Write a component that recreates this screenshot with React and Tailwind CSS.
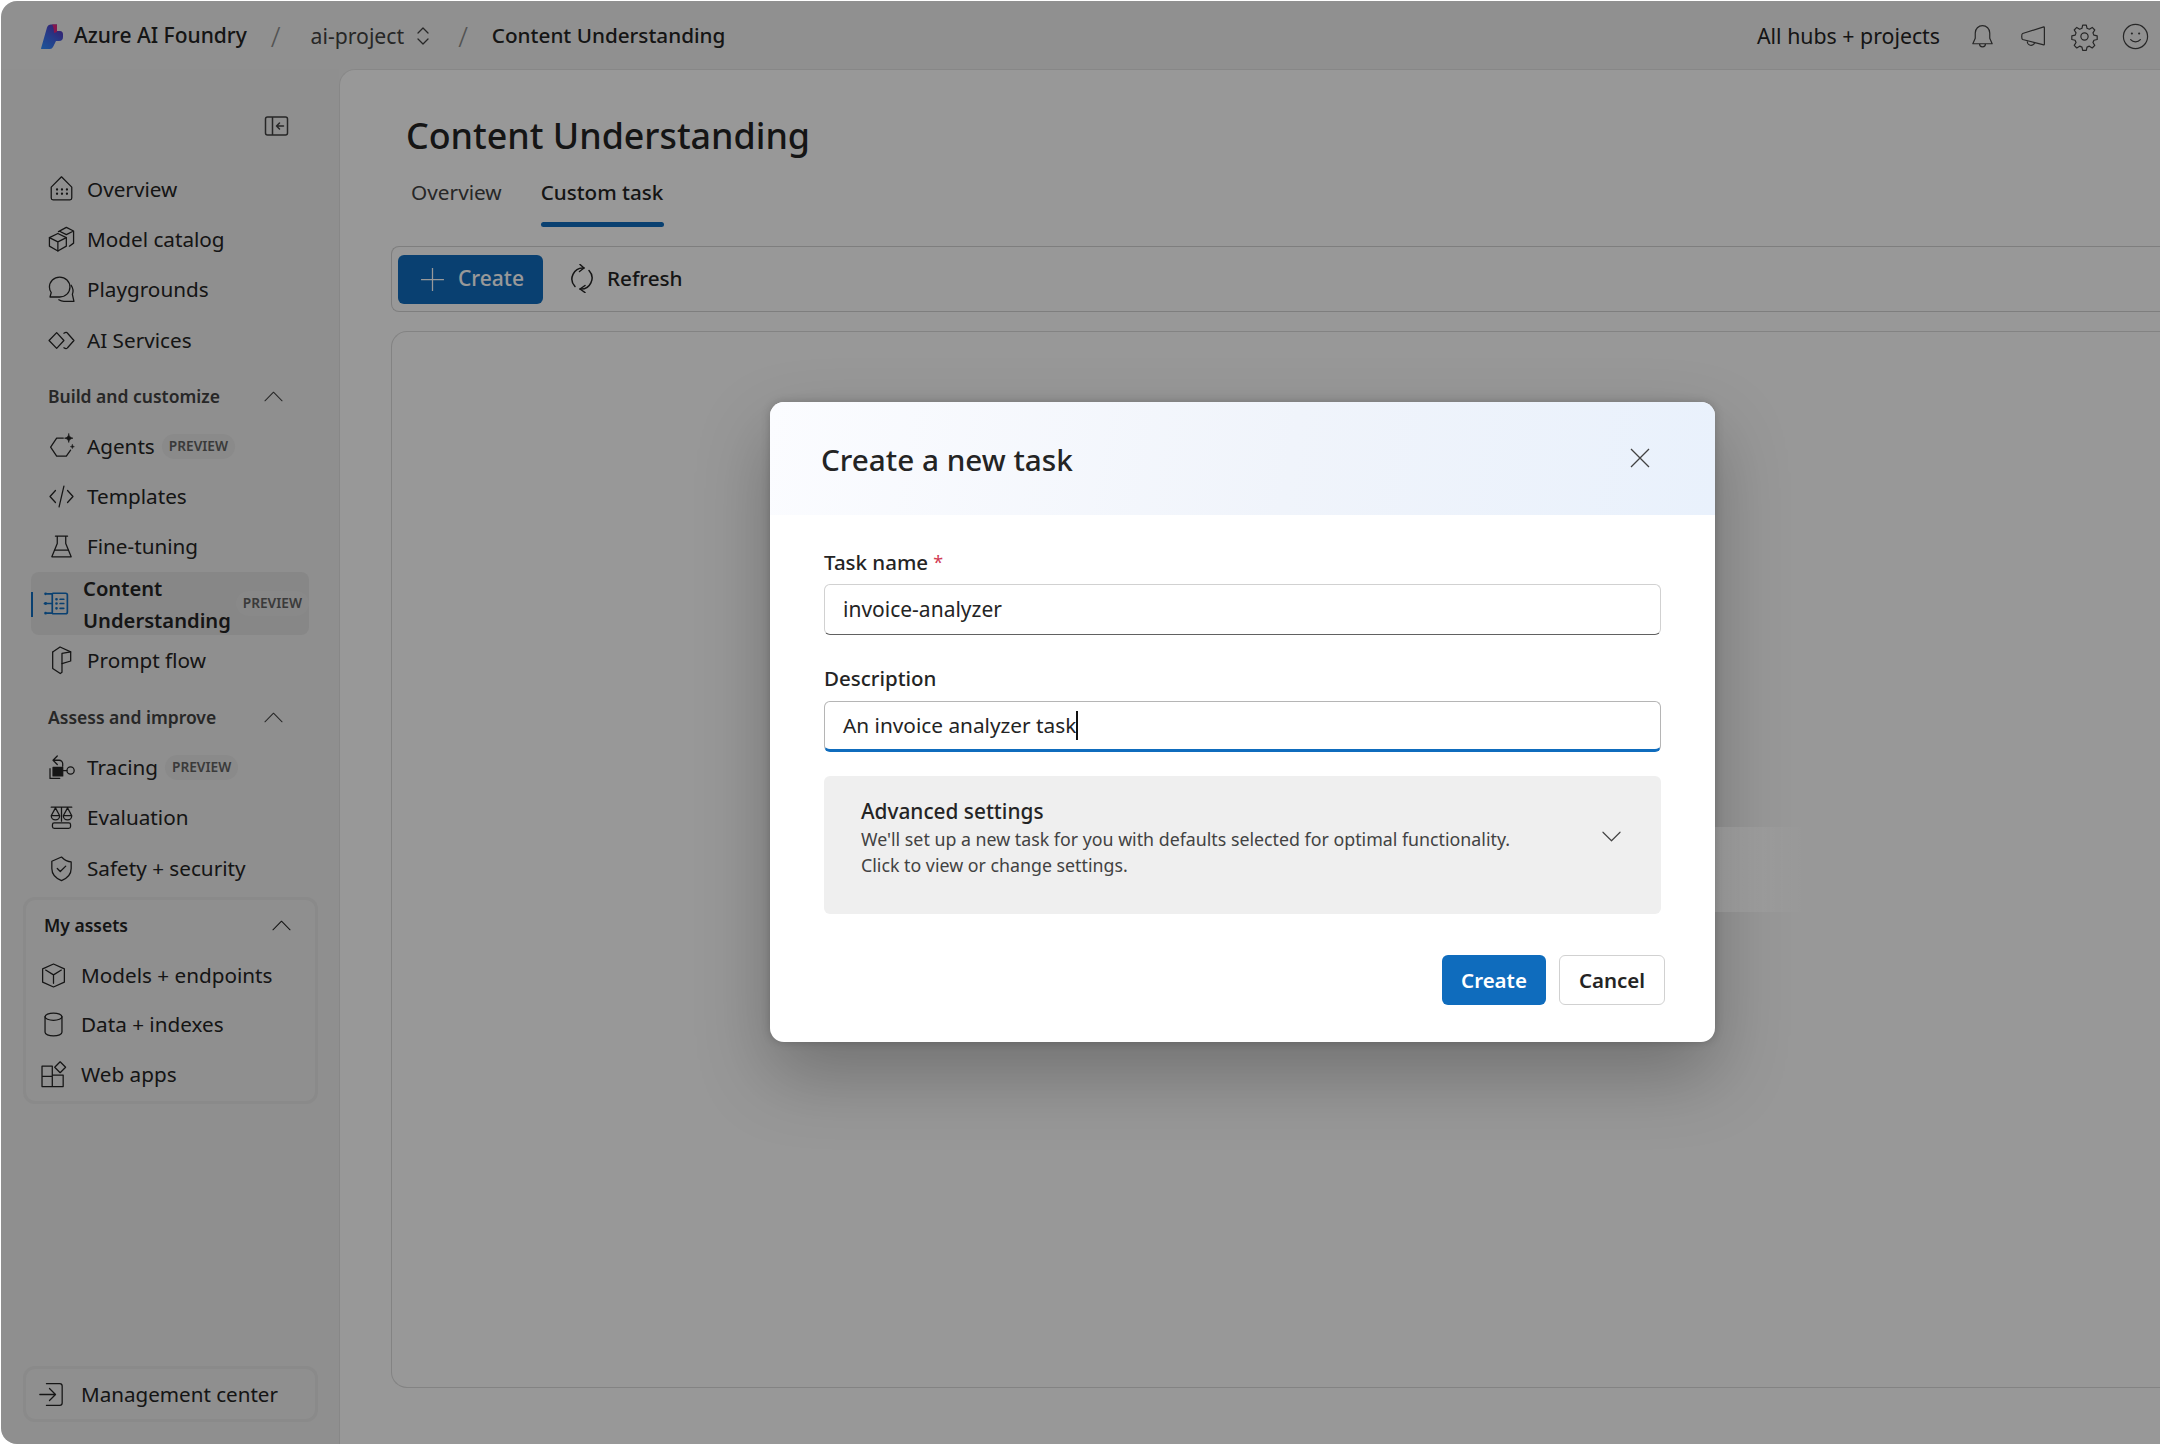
import { useId } from "react";

function Ico({ children, className = "w-[29px] h-[29px]", sw = 1.05 }) {
  return (
    <svg viewBox="0 0 24 24" fill="none" stroke="currentColor" strokeWidth={sw} strokeLinecap="round" strokeLinejoin="round" className={"shrink-0 " + className}>
      {children}
    </svg>
  );
}

function Logo() {
  const id = useId();
  return (
    <svg viewBox="0 0 22 25" className="w-[22px] h-[25px] shrink-0">
      <defs>
        <linearGradient id={id} x1="0" y1="1" x2="0.7" y2="0">
          <stop offset="0" stopColor="#2f90ff" />
          <stop offset="0.55" stopColor="#3f63e4" />
          <stop offset="1" stopColor="#5a35b8" />
        </linearGradient>
      </defs>
      <path d="M0 24.500 L6 3.500 Q7 0.500 10 0.500 L16 0.500 L16 7 H19 Q22 7 22 10.500 V13 Q22 17 18 17 H15 L12 23 Q11 25 9 25 H1 Q0 25 0 24.500z" fill={`url(#${id})`} />
      <path d="M11 0.500 L16 0.500 V8 L13 9 Q13 3 11 0.500z" fill="#e0257f" />
    </svg>
  );
}

const HomeI = () => (
  <Ico>
    <path d="M3.500 10 12 1.500 20.500 10V19a1.500 1.500 0 0 1-1.500 1.500H5A1.500 1.500 0 0 1 3.500 19z" />
    <path d="M8.300 12h.01M12.400 12h.01M16.500 12h.01M8.300 15.500h.01M12.400 15.500h.01M16.500 15.500h.01" strokeWidth="1.900" />
  </Ico>
);
const CatalogI = () => (
  <Ico>
    <path d="M9 7 16 10.500V17.500L9 21.500 2 17.500V10.500z" />
    <path d="M2 10.500 9 14l7-3.500M9 14v7.500" />
    <path d="M9.500 5.500 16 2l6 3v10l-3.500 2.500M10 5 16 8l6-3" />
  </Ico>
);
const ChatI = () => (
  <Ico>
    <path d="M10.500 1.700C15.300 1.700 19 5.400 19 10s-3.700 8.200-8.500 8.200H2.500l1-3.700C2.500 13.200 2 11.600 2 10 2 5.400 5.700 1.700 10.500 1.700z" />
    <path d="M20 8.500c1.700 2.500 2 5 1 7.500l1.300 5.800H14c-1.500 0-3-.500-4.200-1.300" />
  </Ico>
);
const DiamondsI = () => (
  <Ico>
    <path d="M8 5.500 14 12 8 18.500 1.700 12z" />
    <path d="M14 6c1.500-1 2.500-.800 3 0l5.300 6L17 18c-.500.800-1.500 1-3 0" />
  </Ico>
);
const AgentI = () => (
  <Ico>
    <path d="M13.500 5H8L3 12.500 8 20h8l3.500-5" />
    <path d="M18 1.500c.300 2.200 1.200 3.200 3.500 3.600-2.300.400-3.200 1.400-3.500 3.600-.300-2.200-1.200-3.200-3.500-3.600 2.300-.400 3.200-1.400 3.500-3.600z" fill="currentColor" strokeWidth="0.500" />
    <path d="M21 10.500c.100.900.600 1.400 1.600 1.600-1 .200-1.500.700-1.600 1.600-.100-.900-.600-1.400-1.600-1.600 1-.200 1.500-.700 1.600-1.600z" fill="currentColor" strokeWidth="0.500" />
  </Ico>
);
const CodeI = () => (
  <Ico>
    <path d="M7 7 2.500 12 7 17M17 7l4.500 5L17 17M14 3.500 10 20.500" />
  </Ico>
);
const FlaskI = () => (
  <Ico>
    <path d="M7 3.500h10M8.500 3.500v6L4 20.500h16L15.500 9.500V3.500" />
    <path d="M6.500 15h11" />
  </Ico>
);
const ListFlowI = ({ className }) => (
  <Ico sw={1.4} className={className}>
    <path d="M9 3.500h10.500a1.500 1.500 0 0 1 1.500 1.500v14a1.500 1.500 0 0 1-1.500 1.500H9" />
    <path d="M12 8.500h.01M12 12h.01M12 16h.01" strokeWidth="2.200" />
    <path d="M15 8.500h3M15 12h3M15 16h3" />
    <path d="M2 12h6.500M4.500 4h4v16h-4" />
    <path d="M3 4h.01M3 12h.01M3 20h.01" strokeWidth="2.400" />
  </Ico>
);
const PromptI = () => (
  <Ico>
    <path d="M4.700 5 10.800.800 19.600 4.800V12.400L12.400 14.600" />
    <path d="M4.700 5V18.600L11 22.800 12.400 21.800V6.200L19.600 4.800" />
  </Ico>
);
const TraceI = () => (
  <Ico>
    <path d="M8.500 2.500 5 6l3.500 3.500M5 6h5a3 3 0 0 1 3 3v2" />
    <rect x="5" y="12" width="8" height="7" fill="currentColor" />
    <path d="M2.500 13v8h8" />
    <circle cx="19.500" cy="14.500" r="3" />
    <path d="M13.500 14.500h3" />
  </Ico>
);
const ScaleI = () => (
  <Ico>
    <path d="M3.500 3.500h17M12 3.500V15M7 4 3.500 10.500a3.500 3.500 0 0 0 7 0zM17 4l-3.500 6.500a3.500 3.500 0 0 0 7 0zM3.500 10.500h7M13.500 10.500h7" />
    <rect x="4.500" y="16.500" width="15" height="4.500" rx="1.500" />
  </Ico>
);
const ShieldI = () => (
  <Ico>
    <path d="M12 2.500 4 6v6c0 5 3 8 8 10 5-2 8-5 8-10V6.500C17 6.500 14.500 5 12 2.500z" />
    <path d="m8.500 12 2.500 2.500 4.500-4.500" />
  </Ico>
);
const CubeI = () => (
  <Ico>
    <path d="M12 2.500 21 6.500v11l-9 4-9-4v-11z" />
    <path d="M5.500 7.500 12 11.500l6.500-4M12 11.500v7" />
  </Ico>
);
const DbI = () => (
  <Ico>
    <ellipse cx="12" cy="5.500" rx="7" ry="3" />
    <path d="M5 5.500v13c0 1.700 3 3 7 3s7-1.300 7-3v-13" />
  </Ico>
);
const AppsI = () => (
  <Ico>
    <path d="M11 5H2.500v17H20v-9.500h-9zM2.500 13.500H11V22M11 5v8" />
    <path d="m17.500 1.500 4.500 4.500-4.500 4.500L13 6z" />
  </Ico>
);
const EnterI = () => (
  <Ico>
    <path d="M1.500 12H14M9.500 7 14.500 12 9.500 17" />
    <path d="M7 3h11a2 2 0 0 1 2 2v14a2 2 0 0 1-2 2H7" />
  </Ico>
);
const ChevUp = () => (
  <svg viewBox="0 0 20 11" fill="none" stroke="currentColor" strokeWidth="1.100" strokeLinecap="round" strokeLinejoin="round" className="w-[19px] h-[11px] shrink-0">
    <path d="M1 10 10 1l9 9" />
  </svg>
);

const Preview = () => (
  <span className="ml-[7px] h-[25px] px-[7px] rounded-full bg-[#e6e6e6] text-[#616161] text-[13.7px] font-semibold flex items-center">PREVIEW</span>
);

function Item({ icon, label, preview }) {
  return (
    <div className="h-[50.3px] flex items-center pl-[46px] text-[#242424]">
      <span className="w-[40px] flex">{icon}</span>
      <span className="text-[20.7px]">{label}</span>
      {preview && <Preview />}
    </div>
  );
}

function AssetItem({ icon, label }) {
  return (
    <div className="h-[49.8px] flex items-center pl-[13px] text-[#242424]">
      <span className="w-[42px] flex">{icon}</span>
      <span className="text-[20.7px]">{label}</span>
    </div>
  );
}

function Heading({ label }) {
  return (
    <div className="h-[50px] flex items-center justify-between pl-[47px] pr-[56px] text-[#424242]">
      <span className="text-[17.5px] font-semibold">{label}</span>
      <ChevUp />
    </div>
  );
}

function Sidebar() {
  return (
    <aside className="w-[338px] shrink-0 flex flex-col bg-[#eeeeee]">
      <div className="pt-[47px] pl-[263px] h-[95px] text-[#424242]">
        <svg viewBox="0 0 24 20" fill="none" stroke="currentColor" strokeWidth="1.500" className="w-[25px] h-[20px]">
          <rect x="1" y="1" width="22" height="18" rx="2" />
          <path d="M8 1v18" />
          <path d="M19 10h-7M15 7l-3 3 3 3" strokeLinecap="round" strokeLinejoin="round" />
        </svg>
      </div>
      <Item icon={<HomeI />} label="Overview" />
      <Item icon={<CatalogI />} label="Model catalog" />
      <Item icon={<ChatI />} label="Playgrounds" />
      <Item icon={<DiamondsI />} label="AI Services" />
      <div className="h-[6px]" />
      <Heading label="Build and customize" />
      <Item icon={<AgentI />} label="Agents" preview />
      <Item icon={<CodeI />} label="Templates" />
      <Item icon={<FlaskI />} label="Fine-tuning" />
      <div className="relative ml-[30px] w-[278px] h-[63px] rounded-lg bg-[#e1e1e1] flex items-center pl-[11px]">
        <span className="absolute left-0 top-[20px] h-[25px] w-[1.5px] bg-[#0f6cbd]" />
        <span className="w-[41px] flex text-[#0f6cbd]"><ListFlowI /></span>
        <span className="text-[20.2px] leading-[32px] font-semibold text-[#242424] flex-1 whitespace-nowrap">Content<br />Understanding</span>
        <span className="h-[25px] px-[7px] rounded-full bg-[#e4e4e4] text-[#616161] text-[13.7px] font-semibold flex items-center">PREVIEW</span>
      </div>
      <Item icon={<PromptI />} label="Prompt flow" />
      <div className="h-[7px]" />
      <Heading label="Assess and improve" />
      <Item icon={<TraceI />} label="Tracing" preview />
      <Item icon={<ScaleI />} label="Evaluation" />
      <Item icon={<ShieldI />} label="Safety + security" />
      <div className="mt-[4px] ml-[22px] w-[295px] h-[207px] rounded-[12px] border-[3px] border-[#e6e6e6]">
        <div className="h-[50px] flex items-center justify-between pl-[18px] pr-[24px] text-[#242424]">
          <span className="text-[17.5px] font-semibold">My assets</span>
          <ChevUp />
        </div>
        <AssetItem icon={<CubeI />} label="Models + endpoints" />
        <AssetItem icon={<DbI />} label="Data + indexes" />
        <AssetItem icon={<AppsI />} label="Web apps" />
      </div>
      <div className="mt-auto mb-[22px] ml-[22px] w-[295px] h-[56px] rounded-[12px] border-[3px] border-[#e6e6e6] flex items-center pl-[12px] text-[#242424]">
        <span className="w-[43px] flex"><EnterI /></span>
        <span className="text-[20.6px]">Management center</span>
      </div>
    </aside>
  );
}

function TopBar() {
  return (
    <header className="h-[68px] pt-[2px] shrink-0 flex items-center pl-[40px] pr-[10px] text-[#242424]">
      <Logo />
      <span className="ml-[11px] text-[21px] font-medium">Azure AI Foundry</span>
      <span className="ml-[24px] text-[28px] font-light text-[#8a8a8a]">/</span>
      <span className="ml-[30px] text-[21.2px] text-[#424242]">ai-project</span>
      <svg viewBox="0 0 14 20" fill="none" stroke="currentColor" strokeWidth="1.300" className="ml-[12px] w-[14px] h-[20px] text-[#424242]" strokeLinecap="round" strokeLinejoin="round">
        <path d="M2 7 7 2l5 5M2 13l5 5 5-5" />
      </svg>
      <span className="ml-[28px] text-[28px] font-light text-[#8a8a8a]">/</span>
      <span className="ml-[24px] text-[20.7px] font-medium">Content Understanding</span>
      <span className="ml-auto text-[21.3px]">All hubs + projects</span>
      <div className="ml-[28px] flex items-center gap-[22px] text-[#424242]">
        <Ico className="w-[29px] h-[29px]" sw={1}>
          <path d="M12 3a6 6 0 0 0-6 6v4.500L4 18h16l-2-4.500V9a6 6 0 0 0-6-6zM9.500 18a2.500 2.500 0 0 0 5 0" />
        </Ico>
        <Ico className="w-[29px] h-[29px]" sw={1}>
          <path d="M20.500 4 3 9.500c-1 .300-1 4.500 0 5l17.500 4.500a.500.500 0 0 0 .500-.500V4.500a.500.500 0 0 0-.500-.500zM7 15.500a3 3 0 0 0 6 1.500" />
        </Ico>
        <Ico className="w-[29px] h-[29px]" sw={1}>
          <circle cx="12" cy="12" r="3" />
          <path d="M10.500 2.500h3l.600 2.700 1.900.800 2.400-1.500 2.100 2.100-1.500 2.400.800 1.900 2.700.600v3l-2.700.600-.800 1.900 1.500 2.400-2.100 2.100-2.400-1.500-1.900.800-.600 2.700h-3l-.600-2.700-1.900-.800-2.400 1.500-2.100-2.100 1.500-2.400-.800-1.900-2.700-.600v-3l2.700-.600.800-1.900-1.500-2.400 2.100-2.100 2.400 1.500 1.900-.800z" />
        </Ico>
        <Ico className="w-[29px] h-[29px]" sw={1}>
          <circle cx="12" cy="12" r="10" />
          <path d="M8 14.500c2 2.500 6 2.500 8 0" />
          <path d="M9 9.500h.01M15 9.500h.01" strokeWidth="1.800" />
        </Ico>
      </div>
    </header>
  );
}

function MainPanel() {
  return (
    <main className="flex-1 min-w-0 rounded-tl-[16px] border-l border-t border-[#e2e2e2] bg-[#fdfdfd] flex flex-col pl-[51px] overflow-hidden">
      <h1 className="mt-[41px] ml-[15px] text-[35.8px] leading-[48px] font-medium text-[#242424]">Content Understanding</h1>
      <div className="ml-[20px] mt-[18px] flex items-start gap-[39px] text-[20.8px]">
        <span className="text-[#424242] h-[50px]">Overview</span>
        <span className="font-medium text-[#242424] h-[50px] w-[123px] whitespace-nowrap relative text-[20.6px]">
          Custom task
          <span className="absolute left-0 right-0 bottom-0 h-[5px] rounded-full bg-[#0f6cbd]" />
        </span>
      </div>
      <div className="mt-[19px] h-[66px] rounded-l-[8px] border border-r-0 border-[#d2d2d2] flex items-center pl-[6px]">
        <button className="h-[49px] w-[145px] rounded-[6px] bg-[#0f6cbd] text-white flex items-center pl-[22px] gap-[13px]">
          <svg viewBox="0 0 24 24" fill="none" stroke="currentColor" strokeWidth="1.200" className="w-[25px] h-[25px]"><path d="M12 1v22M1 12h22" /></svg>
          <span className="text-[21px] font-medium">Create</span>
        </button>
        <span className="ml-[27px] flex items-center gap-[13px] text-[#242424]">
          <svg viewBox="0 0 24 29" fill="none" stroke="currentColor" strokeWidth="1.500" strokeLinecap="round" strokeLinejoin="round" className="w-[24px] h-[29px]">
            <path d="M14 4A11 11 0 0 0 5 22.500M10 25A11 11 0 0 0 19 6.500" />
            <path d="M10 .500 14 4 9.500 7.500M15 21.500 10 25l5 3.500" />
          </svg>
          <span className="text-[20.7px] font-medium">Refresh</span>
        </span>
      </div>
      <div className="mt-[19px] h-[1057px] rounded-l-[16px] border border-r-0 border-[#dadada]" />
    </main>
  );
}

function Field({ value, focused }) {
  return (
    <div className={"h-[51px] rounded-[6px] border border-[#d1d1d1] flex items-center pl-[18px] text-[#242424] " + (focused ? "text-[20.8px] border-t-[#b5b5b5] border-x-[#b5b5b5] border-b-[3px] border-b-[#0f6cbd]" : "text-[21px] border-b-[#616161]")}>
      <span>{value}</span>
      {focused && <span className="w-[2px] h-[29px] bg-[#111]" />}
    </div>
  );
}

function Dialog() {
  return (
    <div className="ml-[769px] mt-[401px] w-[945px] h-[640px] rounded-[14px] bg-white overflow-hidden shadow-[0_32px_72px_rgba(0,0,0,0.26),0_0_10px_rgba(0,0,0,0.2)] flex flex-col">
      <div className="h-[113px] shrink-0 flex items-center justify-between pl-[51px] pr-[65px] bg-[linear-gradient(100deg,#fbfcff,#f0f4fb_55%,#e9f1fc)]">
        <h2 className="mt-[3px] text-[29.7px] font-medium text-[#242424]">Create a new task</h2>
        <svg viewBox="0 0 20 20" fill="none" stroke="#424242" strokeWidth="1.300" className="w-[20px] h-[20px] -mt-[1px]"><path d="M1 1l18 18M19 1 1 19" /></svg>
      </div>
      <div className="px-[54px] pt-[33px] flex flex-col text-[#242424]">
        <label className="h-[28px] text-[20.5px] font-medium flex items-center">Task name<span className="ml-[5px] text-[18px] font-normal text-[#d13a54]">*</span></label>
        <div className="mt-[8px]"><Field value="invoice-analyzer" /></div>
        <label className="mt-[29px] h-[28px] text-[20.5px] font-medium flex items-center">Description</label>
        <div className="mt-[9px]"><Field value="An invoice analyzer task" focused /></div>
        <div className="mt-[24px] h-[138px] rounded-[6px] bg-[#efefef] flex items-start pl-[37px] pr-[40px] pt-[22px]">
          <div className="flex-1">
            <div className="text-[20.8px] leading-[26px] font-medium">Advanced settings</div>
            <div className="mt-[2px] text-[17.8px] leading-[26px] text-[#424242]">
              We'll set up a new task for you with defaults selected for optimal functionality.<br />
              Click to view or change settings.
            </div>
          </div>
          <svg viewBox="0 0 20 11" fill="none" stroke="#424242" strokeWidth="1.200" strokeLinecap="round" strokeLinejoin="round" className="mt-[33px] w-[19px] h-[11px]"><path d="M1 1l9 9 9-9" /></svg>
        </div>
        <div className="mt-[41px] -mr-[4px] flex justify-end gap-[13px]">
          <button className="w-[104px] h-[50px] rounded-[6px] bg-[#0f6cbd] text-white text-[20.5px] font-semibold">Create</button>
          <button className="w-[106px] h-[50px] rounded-[6px] border border-[#d1d1d1] text-[20.5px] font-semibold text-[#242424]">Cancel</button>
        </div>
      </div>
    </div>
  );
}

export default function App() {
  return (
    <div className="w-[2160px] h-[1444px] bg-white pl-[1px] pt-[1px] overflow-hidden font-['Noto_Sans',sans-serif]">
      <div className="relative h-full rounded-l-[16px] overflow-hidden bg-[#f0f0f0] flex flex-col">
        <TopBar />
        <div className="flex-1 min-h-0 flex">
          <Sidebar />
          <MainPanel />
        </div>
        <div className="absolute inset-0 bg-black/40">
          <Dialog />
          <div className="absolute left-[1714px] top-[826px] w-[90px] h-[85px] bg-linear-to-r from-white/10 to-transparent" />
        </div>
      </div>
    </div>
  );
}
